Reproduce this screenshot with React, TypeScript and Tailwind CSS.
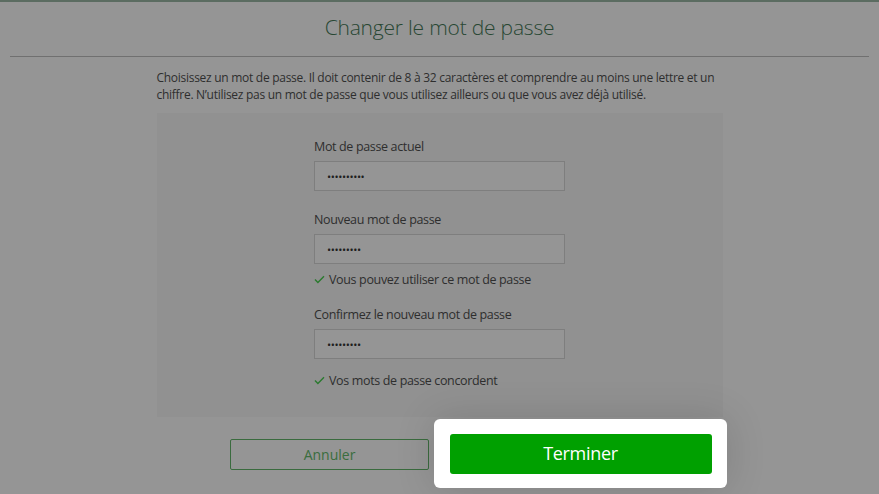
import React from "react";

const font = { fontFamily: '"Open Sans", "Noto Sans", sans-serif' };

function Check() {
  return (
    <svg width="11" height="9" viewBox="0 0 11 9" className="shrink-0">
      <path d="M1 4.6 L3.9 7.5 L10 1.3" fill="none" stroke="#2a7a2e" strokeWidth="1.4" />
    </svg>
  );
}

function Field({ label, dots }: { label: string; dots: number }) {
  return (
    <div className="flex flex-col">
      <div className="text-[12.5px] leading-[17px] text-[#2e2e2e] tracking-[-0.35px]">{label}</div>
      <div className="mt-[6px] h-[30px] w-[251px] border border-[#7e7e7e] bg-[#959595] flex items-center pl-[12px]">
        <span className="text-[11px] tracking-[-0.4px] text-[#1e1e1e] leading-none">{"•".repeat(dots)}</span>
      </div>
    </div>
  );
}

export default function App() {
  return (
    <div style={font} className="w-[879px] h-[494px] bg-[#959595] border-t-2 border-[#5b6c61] overflow-hidden">
      <div className="h-[54px] flex items-center justify-center pb-[4px]">
        <h1 className="text-[21px] font-light text-[#284733] leading-none tracking-[-0.2px]">Changer le mot de passe</h1>
      </div>
      <div className="mx-[10px] h-px bg-[#707070]" />
      <div className="w-[566px] mx-auto mt-[12px]">
        <p className="text-[12px] leading-[17px] text-[#2e2e2e] tracking-[-0.28px]">
          Choisissez un mot de passe. Il doit contenir de 8 à 32 caractères et comprendre au moins une lettre et un chiffre. N’utilisez pas un mot de passe que vous utilisez ailleurs ou que vous avez déjà utilisé.
        </p>
        <div className="mt-[10px] h-[304px] bg-[#919191] pt-[25px]">
          <div className="w-[251px] mx-auto flex flex-col">
            <Field label="Mot de passe actuel" dots={10} />
            <div className="mt-[20px]">
              <Field label="Nouveau mot de passe" dots={9} />
            </div>
            <div className="mt-[7px] flex items-center gap-[4px] text-[12.5px] leading-[17px] text-[#2e2e2e] tracking-[-0.35px]">
              <Check />
              <span>Vous pouvez utiliser ce mot de passe</span>
            </div>
            <div className="mt-[18px]">
              <Field label="Confirmez le nouveau mot de passe" dots={9} />
            </div>
            <div className="mt-[13px] flex items-center gap-[4px] text-[12.5px] leading-[17px] text-[#2e2e2e] tracking-[-0.35px]">
              <Check />
              <span>Vos mots de passe concordent</span>
            </div>
          </div>
        </div>
      </div>
      <div className="mt-[2px] ml-[230px] flex items-center">
        <div className="w-[199px] h-[31px] mt-[2px] border border-[#3a6b3e] rounded-[2px] flex items-center justify-center text-[14px] text-[#3a6d3e]">
          Annuler
        </div>
        <div className="ml-[5px] w-[293px] h-[69px] bg-white rounded-[6px] flex items-center justify-center shadow-[0_0_40px_rgba(0,0,0,0.14)]">
          <div className="w-[262px] h-[40px] bg-[#00a000] rounded-[3px] flex items-center justify-center text-[18px] text-white tracking-[-0.3px]">
            Terminer
          </div>
        </div>
      </div>
    </div>
  );
}
